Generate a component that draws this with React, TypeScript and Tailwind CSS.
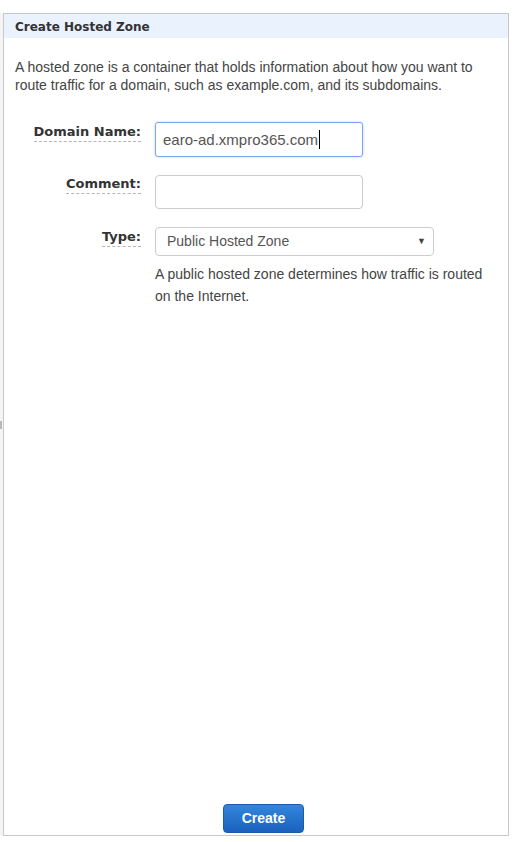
const labelCls =
  "font-['DejaVu_Sans',Verdana,sans-serif] text-[13px] font-bold leading-[16px] text-[#333] border-b border-dashed border-[#b5b5b5] pb-[1px]";

const FormRow = ({ label, children, top }: { label: string; children: React.ReactNode; top: string }) => {
  return (
    <div className="flex items-start">
      <div className={`w-[137px] shrink-0 flex justify-end ${top}`}>
        <span className={labelCls}>{label}</span>
      </div>
      <div className="ml-[14px]">{children}</div>
    </div>
  );
};

export default function App() {
  return (
    <div className="relative w-[522px] h-[842px] bg-white pl-[3px] pt-[13px] font-['Liberation_Sans',Arial,sans-serif]">
      {/* thin strip left of the panel */}
      <div className="absolute left-0 top-[13px] w-[3px] h-[823px] bg-[#f4f4f4]" />
      <div className="absolute left-0 top-[421px] w-[2px] h-[8px] bg-[#b9b9b9]" />

      <div className="relative w-[506px] h-[823px] border border-[#c8c8c8] flex flex-col">
        <div className="h-[24px] bg-[#eaf2fd] px-[11px] pt-[1px] flex items-center">
          <span className="font-['DejaVu_Sans',Verdana,sans-serif] text-[12px] font-bold text-[#333]">
            Create Hosted Zone
          </span>
        </div>

        <p className="px-[11px] pt-[20px] text-[14px] leading-[18px] text-[#444]">
          A hosted zone is a container that holds information about how you want to
          route traffic for a domain, such as example.com, and its subdomains.
        </p>

        <div className="mt-[28px] flex flex-col gap-[18px]">
          <FormRow label="Domain Name:" top="pt-[2px]">
            <div className="w-[208px] h-[35px] rounded-[3px] border border-[#79a6f2] shadow-[0_0_2px_rgba(82,140,230,0.5)] flex items-center pl-[7px]">
              <span className="text-[15px] text-[#555] leading-none">earo-ad.xmpro365.com</span>
              <span className="w-px h-[19px] bg-black ml-[1px]" />
            </div>
          </FormRow>

          <FormRow label="Comment:" top="pt-[1px]">
            <div className="w-[208px] h-[34px] rounded-[4px] border border-[#cccccc]" />
          </FormRow>

          <FormRow label="Type:" top="pt-[2px]">
            <div className="w-[279px] h-[29px] rounded-[4px] border border-[#cccccc] flex items-center justify-between pl-[11px] pr-[7px]">
              <span className="text-[14px] text-[#555]">Public Hosted Zone</span>
              <span className="text-[9px] text-[#444]">▼</span>
            </div>
            <p className="mt-[7px] w-[345px] text-[14px] leading-[22px] text-[#444]">
              A public hosted zone determines how traffic is routed on the Internet.
            </p>
          </FormRow>
        </div>

        <div className="flex-1" />

        <div className="flex pl-[219px] pb-[2px]">
          <button className="w-[81px] h-[29px] rounded-[4px] border border-[#1c5ba8] bg-gradient-to-b from-[#3386dc] to-[#1a62bd] text-white text-[14px] font-bold font-['Liberation_Sans',Arial,sans-serif]">
            Create
          </button>
        </div>
      </div>
    </div>
  );
}
